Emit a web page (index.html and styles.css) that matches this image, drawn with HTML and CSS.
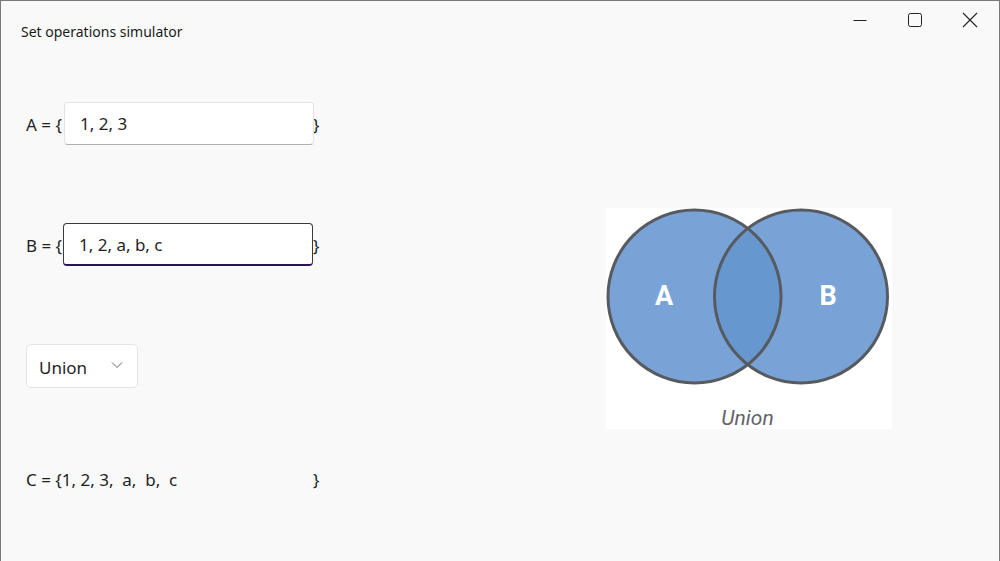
FILE: index.html
```html
<!DOCTYPE html>
<html>
<head>
<meta charset="utf-8">
<link rel="stylesheet" href="styles.css">
</head>
<body>
<div class="window">
  <header class="titlebar">
    <span class="title">Set operations simulator</span>
    <div class="caption">
      <span class="cbtn"><svg width="14" height="14" viewBox="0 0 14 14"><path d="M0.5 7.5H13.5" stroke="#222" stroke-width="1"/></svg></span>
      <span class="cbtn"><svg width="14" height="14" viewBox="0 0 14 14"><rect x="0.5" y="0.5" width="13" height="13" rx="2" fill="none" stroke="#222" stroke-width="1"/></svg></span>
      <span class="cbtn"><svg width="16" height="16" viewBox="0 0 16 16"><path d="M1 1L15 15M15 1L1 15" stroke="#222" stroke-width="1.1"/></svg></span>
    </div>
  </header>
  <main class="content">
    <section class="left">
      <div class="row r1">
        <span class="lbl">A = {</span>
        <div class="tb"><span>1, 2, 3</span></div>
        <span class="brace">}</span>
      </div>
      <div class="row r2">
        <span class="lbl">B = {</span>
        <div class="tb focused"><span>1, 2, a, b, c</span></div>
        <span class="brace">}</span>
      </div>
      <div class="row r3">
        <div class="combo">
          <span>Union</span>
          <svg width="12" height="8" viewBox="0 0 12 8"><path d="M1 1.5L6 6.5L11 1.5" fill="none" stroke="#666" stroke-width="1"/></svg>
        </div>
      </div>
      <div class="row r4">
        <span class="result">C = {1, 2, 3,&nbsp; a,&nbsp; b,&nbsp; c</span>
        <span class="brace rb">}</span>
      </div>
    </section>
    <section class="right">
      <div class="venn-card">
        <svg class="venn" width="286" height="200" viewBox="0 0 286 200">
          <defs>
            <clipPath id="cl"><circle cx="88.5" cy="88.5" r="86.5"/></clipPath>
          </defs>
          <circle cx="88.5" cy="88.5" r="86.5" fill="#79a3d7"/>
          <circle cx="195" cy="88.5" r="86.5" fill="#79a3d7"/>
          <circle cx="195" cy="88.5" r="86.5" fill="#6797cf" clip-path="url(#cl)"/>
          <circle cx="88.5" cy="88.5" r="86.5" fill="none" stroke="#575b60" stroke-width="3"/>
          <circle cx="195" cy="88.5" r="86.5" fill="none" stroke="#575b60" stroke-width="3"/>
          <text x="58" y="97" class="vl">A</text>
          <text x="222" y="97" class="vl">B</text>
        </svg>
        <div class="vu">Union</div>
      </div>
    </section>
  </main>
</div>
</body>
</html>
```
FILE: styles.css
```css
html, body {
  margin: 0;
  padding: 0;
}
body {
  font-family: "Noto Sans", "Open Sans", sans-serif;
  color: #1b1b1b;
  background: #f9f9f9;
}
.window {
  width: 1000px;
  height: 561px;
  box-sizing: border-box;
  border: 1px solid #7a7a7a;
  border-bottom: none;
  background: #f9f9f9;
  overflow: hidden;
}
.titlebar {
  height: 44px;
  display: flex;
  align-items: flex-start;
  justify-content: space-between;
}
.title {
  font-size: 14px;
  margin: 22px 0 0 20px;
  line-height: 18px;
  color: #1b1b1b;
}
.caption {
  display: flex;
  padding-right: 2px;
}
.cbtn {
  width: 55px;
  height: 38px;
  display: flex;
  align-items: center;
  justify-content: center;
}
.content {
  display: flex;
  height: 516px;
}
.left {
  width: 560px;
  padding: 56px 0 0 25px;
  box-sizing: border-box;
  display: flex;
  flex-direction: column;
}
.row {
  display: flex;
  align-items: center;
  font-size: 17px;
  color: #1f1f1f;
}
.r1 { height: 44px; padding-top: 3px; box-sizing: border-box; }
.r2 { height: 44px; margin-top: 77px; padding-top: 3px; box-sizing: border-box; }
.r3 { height: 44px; margin-top: 78px; }
.r4 { height: 44px; margin-top: 69px; }
.r1 .tb, .r2 .tb { margin-top: -3px; }
.lbl {
  width: 38px;
  white-space: nowrap;
  overflow: visible;
}
.tb {
  width: 250px;
  height: 43px;
  box-sizing: border-box;
  background: #fff;
  border: 1px solid #e3e3e3;
  border-bottom-color: #b0b0b0;
  border-radius: 4px;
  display: flex;
  align-items: center;
  padding-left: 15px;
  position: relative;
  z-index: 1;
}
.tb + .brace { margin-left: -1px; }
.tb.focused {
  border: 1px solid #3a3a3a;
  border-bottom: 2px solid #2a1553;
  padding-top: 1px;
  margin-left: -1px;
}
.tb.focused + .brace { margin-left: 0; }
.combo {
  width: 112px;
  height: 44px;
  box-sizing: border-box;
  background: #fff;
  border: 1px solid #e5e5e5;
  border-radius: 5px;
  display: flex;
  align-items: center;
  justify-content: space-between;
  padding: 2px 14px 0 12px;
  font-size: 17px;
}
.combo svg { margin-top: -4px; }
.result {
  width: 287px;
  white-space: pre;
}
.right {
  flex: 1;
  padding: 163px 0 0 45px;
}
.venn-card {
  width: 286px;
  height: 221px;
  background: #ffffff;
  display: flex;
  flex-direction: column;
  align-items: center;
}
.venn { display: block; }
.vl {
  font-family: Roboto, "Noto Sans", sans-serif;
  font-weight: 700;
  font-size: 27px;
  fill: #ffffff;
  text-anchor: middle;
}
.vu {
  font-family: Roboto, "Noto Sans", sans-serif;
  font-style: italic;
  font-size: 21px;
  line-height: 21px;
  color: #5f6368;
  margin-left: -3px;
}
```
